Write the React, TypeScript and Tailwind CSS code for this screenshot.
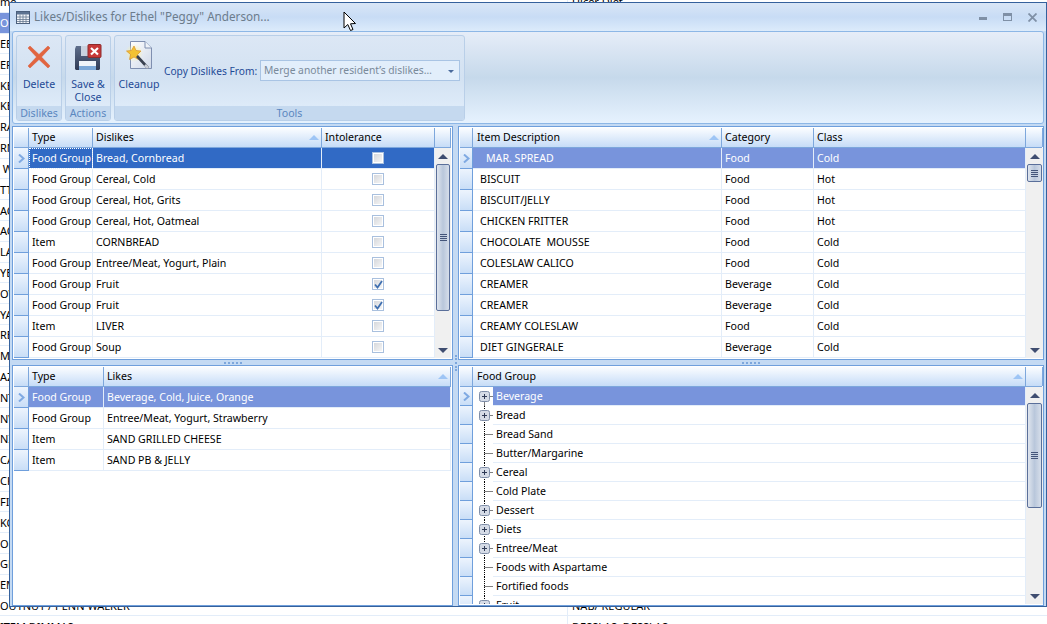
import React from "react";

const bgLeft = ["me","OE","EEI","ER","KE","KE","RA","RN"," W","TT","AC","AC","LA","YE","OW","YA","RE","MP","AZ","NT","NW","NI","CA","CK","FIC","KO","OL","GE","EM","OUTNUT / PENN WALKER","ITEM DIMMAS"];
const bgRight: Record<number,string> = {0:"Ulcer Diet",29:"NAB/ REGULAR",30:"DESSLAS, DESSLAS"};

function Background() {
  return (
    <div className="-mt-[8px] flex flex-col">
      {bgLeft.map((t, i) => (
        <div key={i} className={`flex h-[20.82px] shrink-0 items-center border-b border-[#e3edf9] text-[11px] leading-none text-black ${i === 1 ? "bg-[#7894dc] text-white" : ""}`}>
          <span className="flex h-full w-[568px] items-center whitespace-pre border-r border-[#e3edf9]">{t}</span>
          <span className="pl-[4px]">{bgRight[i] ?? ""}</span>
        </div>
      ))}
    </div>
  );
}

function TitleIcon() {
  return (
    <svg width="14" height="13" viewBox="0 0 14 13" className="shrink-0">
      <rect x="0.5" y="0.5" width="13" height="12" fill="#f4f6fa" stroke="#4b5f7c" />
      <rect x="1" y="1" width="12" height="2.5" fill="#5d7391" />
      <path d="M1 6h12M1 8.500h12M1 10.500h12M4 3.500v9M7 3.500v9M10 3.500v9" stroke="#66788f" strokeWidth="0.8" />
    </svg>
  );
}

function DeleteIcon() {
  return (
    <svg width="24" height="24" viewBox="0 0 24 24">
      <path d="M3 1 L12 9.500 L21 1 L23 3 L14.500 12 L23 21 L21 23 L12 14.500 L3 23 L1 21 L9.500 12 L1 3 Z" fill="#e2653f" stroke="#d9583a" strokeWidth="0.5" />
    </svg>
  );
}

function SaveIcon() {
  return (
    <svg width="28" height="27" viewBox="0 0 28 27">
      <defs>
        <linearGradient id="fl" x1="0" y1="0" x2="0" y2="1">
          <stop offset="0" stopColor="#5f6f8c" />
          <stop offset="1" stopColor="#2f3a55" />
        </linearGradient>
      </defs>
      <path d="M1 5 L2 2 H23 L26 7 V25 L25 26 H2 L1 25 Z" fill="url(#fl)" />
      <rect x="7" y="2" width="12" height="10" fill="#c9d2df" />
      <rect x="14" y="3" width="3" height="7" fill="#3f4c68" />
      <rect x="5" y="17" width="17" height="9" fill="#eef3f9" />
      <rect x="5" y="22" width="17" height="4" fill="#7ba7d7" />
      <rect x="14" y="0.5" width="13" height="13" rx="1" fill="#c63838" stroke="#8e2a2a" />
      <path d="M17 4 L24 10.500 M24 4 L17 10.500" stroke="#fff" strokeWidth="2.2" />
    </svg>
  );
}

function CleanupIcon() {
  return (
    <svg width="28" height="30" viewBox="0 0 28 30">
      <defs>
        <linearGradient id="pg" x1="0" y1="0" x2="1" y2="1">
          <stop offset="0" stopColor="#ffffff" />
          <stop offset="1" stopColor="#cfd8e8" />
        </linearGradient>
        <radialGradient id="gl" cx="0.500" cy="0.500" r="0.500">
          <stop offset="0" stopColor="#fff3a0" />
          <stop offset="1" stopColor="#fff3a0" stopOpacity="0" />
        </radialGradient>
      </defs>
      <path d="M5.500 0.500 H20 L26.500 7 V27.500 H5.500 Z" fill="url(#pg)" stroke="#7f8fb0" />
      <path d="M20 0.500 V7 H26.500" fill="#eef2f8" stroke="#7f8fb0" />
      <circle cx="9" cy="12" r="9" fill="url(#gl)" />
      <path d="M9 5 L11 9.500 L16 10 L12.500 13.500 L13.500 18.500 L9 16 L4.500 18.500 L5.500 13.500 L1.500 10 L6.500 9.500 Z" fill="#f3c233" stroke="#d9902a" strokeWidth="0.7" />
      <path d="M12 15 L23 27" stroke="#3a4150" strokeWidth="2.6" />
      <path d="M20 24 L23 27" stroke="#c8ccd4" strokeWidth="2.6" />
    </svg>
  );
}

function Cursor() {
  return (
    <svg width="14" height="21" viewBox="0 0 14 21">
      <path d="M1 1 V17 L4.800 13.500 L7.500 19.500 L10 18.500 L7.500 12.800 L12.500 12.500 Z" fill="#fff" stroke="#000" strokeWidth="1" />
    </svg>
  );
}

function Group({ className, caption, children }: { className: string; caption: string; children: React.ReactNode }) {
  return (
    <div className={`flex flex-col overflow-hidden rounded-[3px] border border-[#b9cfe8] bg-gradient-to-b from-[#dce7f5] via-[#d3e2f2] to-[#e3effc] ${className}`}>
      <div className="flex min-h-0 flex-1">{children}</div>
      <div className="h-[14px] shrink-0 bg-[#c5d9ef] text-center text-[10.6px] leading-[14px] text-[#5b87c0]">{caption}</div>
    </div>
  );
}

function SortArrow() {
  return <span className="ml-auto h-0 w-0 border-x-[5px] border-b-[5px] border-x-transparent border-b-[#9ec5f5]" />;
}

function HeaderCell({ label, sort, first }: { label?: string; sort?: boolean; first?: boolean }) {
  return (
    <div className={`flex items-center border-r border-[#7da7dc] pr-[2px] text-black ${first ? "pl-[4px]" : "pl-[3px]"}`}>
      <span>{label}</span>
      {sort && <SortArrow />}
    </div>
  );
}

function Indicator({ active }: { active?: boolean }) {
  return (
    <div className="flex items-center justify-center border-b border-r border-[#6f9fdc] bg-gradient-to-b from-[#edf4fd] to-[#c9def7]">
      {active && (
        <svg width="7" height="9" viewBox="0 0 7 9">
          <path d="M1 0.500 L5.500 4.500 L1 8.500" fill="none" stroke="#7fa9e2" strokeWidth="2" />
        </svg>
      )}
    </div>
  );
}

function Check({ on }: { on?: boolean }) {
  return (
    <div className="flex h-[12px] w-[12px] items-center justify-center border border-[#a9c0de] bg-white p-[1px]">
      <div className="flex h-full w-full items-center justify-center bg-gradient-to-br from-[#d6d8dc] to-[#f5f5f5]">
        {on && (
          <svg width="9" height="9" viewBox="0 0 9 9" className="shrink-0">
            <path d="M1 4.500 L3.500 7.500 L8 1" fill="none" stroke="#3f6fb0" strokeWidth="1.8" />
          </svg>
        )}
      </div>
    </div>
  );
}

function Triangle({ down }: { down?: boolean }) {
  return (
    <div className="flex h-[16px] shrink-0 items-center justify-center">
      <span className={`h-0 w-0 border-x-[5px] border-x-transparent ${down ? "border-t-[5px] border-t-[#3f4d70]" : "border-b-[5px] border-b-[#3f4d70]"}`} />
    </div>
  );
}

function Scrollbar({ thumb }: { thumb: string }) {
  return (
    <div className="flex h-full flex-col bg-[#f0f0f0] px-[1px]">
      <Triangle />
      <div className={`flex shrink-0 flex-col items-center justify-center gap-[1px] rounded-[2px] border border-[#5a6f9a] bg-gradient-to-r from-[#dfe5ee] via-[#b9c7db] to-[#d6deea] ${thumb}`}>
        <span className="h-px w-[7px] bg-[#44557a]" />
        <span className="h-px w-[7px] bg-[#44557a]" />
        <span className="h-px w-[7px] bg-[#44557a]" />
        <span className="h-px w-[7px] bg-[#44557a]" />
      </div>
      <div className="flex-1" />
      <Triangle down />
    </div>
  );
}

const dislikes: [string, string, boolean][] = [
  ["Food Group", "Bread, Cornbread", false],
  ["Food Group", "Cereal, Cold", false],
  ["Food Group", "Cereal, Hot, Grits", false],
  ["Food Group", "Cereal, Hot, Oatmeal", false],
  ["Item", "CORNBREAD", false],
  ["Food Group", "Entree/Meat, Yogurt, Plain", false],
  ["Food Group", "Fruit", true],
  ["Food Group", "Fruit", true],
  ["Item", "LIVER", false],
  ["Food Group", "Soup", false],
];

const items: [string, string, string][] = [
  ["MAR. SPREAD", "Food", "Cold"],
  ["BISCUIT", "Food", "Hot"],
  ["BISCUIT/JELLY", "Food", "Hot"],
  ["CHICKEN FRITTER", "Food", "Hot"],
  ["CHOCOLATE  MOUSSE", "Food", "Cold"],
  ["COLESLAW CALICO", "Food", "Cold"],
  ["CREAMER", "Beverage", "Cold"],
  ["CREAMER", "Beverage", "Cold"],
  ["CREAMY COLESLAW", "Food", "Cold"],
  ["DIET GINGERALE", "Beverage", "Cold"],
];

const likes: [string, string][] = [
  ["Food Group", "Beverage, Cold, Juice, Orange"],
  ["Food Group", "Entree/Meat, Yogurt, Strawberry"],
  ["Item", "SAND GRILLED CHEESE"],
  ["Item", "SAND PB & JELLY"],
];

const tree: [string, boolean][] = [
  ["Beverage", true],
  ["Bread", true],
  ["Bread Sand", false],
  ["Butter/Margarine", false],
  ["Cereal", true],
  ["Cold Plate", false],
  ["Dessert", true],
  ["Diets", true],
  ["Entree/Meat", true],
  ["Foods with Aspartame", false],
  ["Fortified foods", false],
  ["Fruit", true],
];

const cell = "flex items-center border-b border-r border-[#e3edf9] overflow-hidden whitespace-pre";
const frame = "flex h-full flex-col overflow-hidden border border-[#6f9fdc] bg-white p-px text-[10.6px] leading-none";

function DislikesGrid() {
  const cols = "grid-cols-[15px_64px_229px_113px]";
  return (
    <div className={frame}>
      <div className="grid h-[20px] shrink-0 grid-cols-[15px_64px_229px_113px_16px] border-b border-[#7da7dc] bg-gradient-to-b from-[#fbfdff] to-[#c6dcf7]">
        <HeaderCell />
        <HeaderCell label="Type" />
        <HeaderCell label="Dislikes" sort />
        <HeaderCell label="Intolerance" />
        <div className="border-r border-[#7da7dc]" />
      </div>
      <div className="grid min-h-0 flex-1 grid-cols-[421px_16px]">
        <div className="flex flex-col">
          {dislikes.map((r, i) => (
            <div key={i} className={`grid h-[21px] shrink-0 ${cols} ${i === 0 ? "bg-[#316ac5] text-white" : "text-black"}`}>
              <Indicator active={i === 0} />
              <div className={`${cell} pl-[3px] ${i === 0 ? "outline-1 -outline-offset-1 outline-dotted outline-white" : ""}`}>{r[0]}</div>
              <div className={`${cell} pl-[3px]`}>{r[1]}</div>
              <div className="flex items-center justify-center border-b border-r border-[#e3edf9]"><Check on={r[2]} /></div>
            </div>
          ))}
        </div>
        <Scrollbar thumb="h-[147px]" />
      </div>
    </div>
  );
}

function ItemsGrid() {
  const cols = "grid-cols-[13px_249px_92px_212px]";
  return (
    <div className={frame}>
      <div className="grid h-[20px] shrink-0 grid-cols-[13px_249px_92px_212px_17px] border-b border-[#7da7dc] bg-gradient-to-b from-[#fbfdff] to-[#c6dcf7]">
        <HeaderCell />
        <HeaderCell label="Item Description" sort first />
        <HeaderCell label="Category" />
        <HeaderCell label="Class" />
        <div className="border-r border-[#7da7dc]" />
      </div>
      <div className="grid min-h-0 flex-1 grid-cols-[566px_17px]">
        <div className="flex flex-col">
          {items.map((r, i) => (
            <div key={i} className={`grid h-[21px] shrink-0 ${cols} ${i === 0 ? "bg-[#7894dc] text-white" : "text-black"}`}>
              <Indicator active={i === 0} />
              <div className={`${cell} ${i === 0 ? "pl-[13px]" : "pl-[7px]"}`}>{r[0]}</div>
              <div className={`${cell} pl-[3px]`}>{r[1]}</div>
              <div className={`${cell} pl-[3px]`}>{r[2]}</div>
            </div>
          ))}
        </div>
        <Scrollbar thumb="h-[18px]" />
      </div>
    </div>
  );
}

function LikesGrid() {
  return (
    <div className={frame}>
      <div className="grid h-[20px] shrink-0 grid-cols-[15px_75px_347px] border-b border-[#7da7dc] bg-gradient-to-b from-[#fbfdff] to-[#c6dcf7]">
        <HeaderCell />
        <HeaderCell label="Type" />
        <HeaderCell label="Likes" sort />
      </div>
      {likes.map((r, i) => (
        <div key={i} className={`grid h-[21px] shrink-0 grid-cols-[15px_75px_347px] ${i === 0 ? "bg-[#7894dc] text-white" : "text-black"}`}>
          <Indicator active={i === 0} />
          <div className={`${cell} pl-[3px]`}>{r[0]}</div>
          <div className={`${cell} pl-[3px]`}>{r[1]}</div>
        </div>
      ))}
    </div>
  );
}

function TreeGlyph({ box, first }: { box: boolean; first: boolean }) {
  return (
    <svg width="20" height="19" viewBox="0 0 20 19" className="shrink-0">
      <path d={first ? "M11.500 9.500 V19" : "M11.500 0 V19"} stroke="#000" strokeDasharray="1 1" />
      <path d="M11.500 9.500 H20" stroke="#000" strokeDasharray="1 1" />
      {box && (
        <>
          <rect x="6.500" y="4.500" width="10" height="10" rx="2" fill="#d5dbe6" stroke="#7f8ea8" />
          <path d="M9 9.500 H14 M11.500 7 V12" stroke="#2f3a55" />
        </>
      )}
    </svg>
  );
}

function TreeGrid() {
  return (
    <div className={frame}>
      <div className="grid h-[20px] shrink-0 grid-cols-[13px_553px_17px] border-b border-[#7da7dc] bg-gradient-to-b from-[#fbfdff] to-[#c6dcf7]">
        <HeaderCell />
        <HeaderCell label="Food Group" sort first />
        <div className="border-r border-[#7da7dc]" />
      </div>
      <div className="grid min-h-0 flex-1 grid-cols-[566px_17px]">
        <div className="flex min-h-0 flex-col overflow-hidden">
          {tree.map((r, i) => (
            <div key={i} className="grid h-[19px] shrink-0 grid-cols-[13px_553px] text-black">
              <Indicator active={i === 0} />
              <div className="flex">
                <TreeGlyph box={r[1]} first={i === 0} />
                <div className={`flex flex-1 items-center border-b border-r border-[#e3edf9] pl-[3px] ${i === 0 ? "bg-[#7894dc] text-white" : ""}`}>{r[0]}</div>
              </div>
            </div>
          ))}
        </div>
        <Scrollbar thumb="h-[105px]" />
      </div>
    </div>
  );
}

function Grip() {
  return <span className="h-[2px] w-[18px] border-t-2 border-dotted border-[#7da7dc]" />;
}

export default function App() {
  return (
    <div className="relative h-[624px] w-[1047px] overflow-hidden bg-white font-['Noto_Sans',sans-serif]">
      <Background />
      <div className="absolute left-[9px] top-[2px] flex h-[605px] w-[1038px] flex-col border border-[#35619c] bg-[#c4daf3]">
        <div className="flex h-[28px] shrink-0 items-center gap-[4px] bg-gradient-to-b from-[#d9e6f6] via-[#c8dcf5] to-[#dcebfb] pl-[6px] text-[11.7px] text-[#6c7c8c]">
          <TitleIcon />
          <span>Likes/Dislikes for Ethel "Peggy" Anderson...</span>
          <div className="ml-auto mr-[9px] flex items-center gap-[16px]">
            <span className="h-[3px] w-[8px] translate-y-[1px] bg-[#7f90a6]" />
            <span className="h-[8px] w-[9px] border border-t-[3px] border-[#7f90a6]" />
            <svg width="9" height="9" viewBox="0 0 9 9"><path d="M0.500 0.500 L8.500 8.500 M8.500 0.500 L0.500 8.500" stroke="#7f90a6" strokeWidth="1.8" /></svg>
          </div>
        </div>
        <div className="mx-[2px] flex h-[93px] shrink-0 gap-[3px] rounded-[3px] border border-[#8db7e6] bg-gradient-to-b from-[#e6edf8] via-[#c6d9eb] to-[#e6f2fe] pb-[2px] pl-[3px] pt-[3px]">
          <Group className="w-[46px]" caption="Dislikes">
            <div className="flex w-full flex-col items-center pt-[9px] text-[10.6px] leading-[13px] text-[#1e4a96]">
              <DeleteIcon />
              <span className="mt-[9px]">Delete</span>
            </div>
          </Group>
          <Group className="w-[46px]" caption="Actions">
            <div className="flex w-full flex-col items-center pt-[8px] text-center text-[10.6px] leading-[13px] text-[#1e4a96]">
              <SaveIcon />
              <span className="mt-[7px]">Save &amp;<br />Close</span>
            </div>
          </Group>
          <Group className="w-[351px]" caption="Tools">
            <div className="flex w-full text-[10.6px] text-[#1e4a96]">
              <div className="flex w-[48px] flex-col items-center pt-[5px] leading-[13px]">
                <CleanupIcon />
                <span className="mt-[7px]">Cleanup</span>
              </div>
              <div className="flex h-[46px] flex-1 items-end pb-[1px]">
                <span className="ml-[1px] h-[21px] w-[93px] whitespace-nowrap text-[10.2px] leading-[23px]">Copy Dislikes From:</span>
                <div className="ml-[3px] flex h-[21px] w-[200px] shrink-0 items-center justify-between border border-[#a9c4e4] bg-[#e2eefb] pl-[3px] pr-[5px] pt-px text-[10.3px] text-[#7a8a9a]">
                  <span className="whitespace-nowrap">Merge another resident’s dislikes…</span>
                  <span className="h-0 w-0 border-x-[3px] border-t-[3px] border-x-transparent border-t-[#4a6a9c]" />
                </div>
              </div>
            </div>
          </Group>
        </div>
        <div className="relative mx-[2px] mt-[2px] grid min-h-0 flex-1 grid-cols-[441px_5px_586px] grid-rows-[234px_5px_241px]">
          <DislikesGrid />
          <div />
          <ItemsGrid />
          <div className="flex items-center justify-center"><Grip /></div>
          <div className="flex items-start justify-center">
            <span className="absolute left-[443px] top-[229px] h-[16px] w-[2px] border-l-2 border-dotted border-[#7da7dc]" />
          </div>
          <div className="flex items-center justify-center"><Grip /></div>
          <LikesGrid />
          <div />
          <TreeGrid />
        </div>
      </div>
      <div className="absolute left-[343px] top-[11px]"><Cursor /></div>
    </div>
  );
}
